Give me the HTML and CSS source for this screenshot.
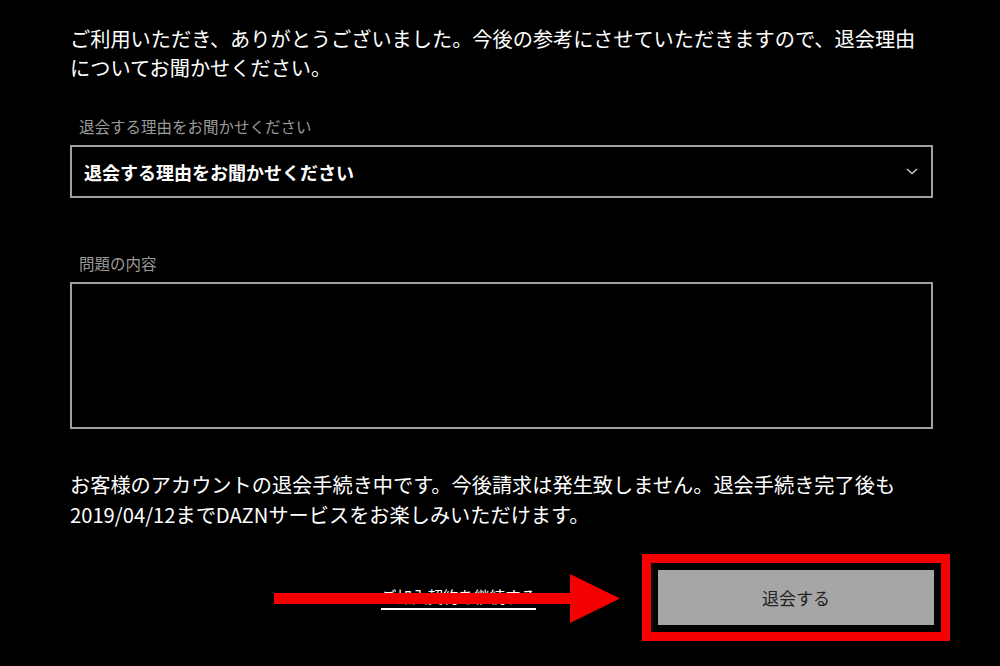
FILE: index.html
```html
<!DOCTYPE html>
<html lang="ja">
<head>
<meta charset="utf-8">
<title>退会</title>
<link rel="stylesheet" href="styles.css">
</head>
<body>
<main class="page">
  <p class="lead">ご利用いただき、ありがとうございました。今後の参考にさせていただきますので、退会理由<br>についてお聞かせください。</p>

  <div class="field">
    <div class="label">退会する理由をお聞かせください</div>
    <div class="select">
      <span class="select-text">退会する理由をお聞かせください</span>
      <svg class="chev" width="12" height="7" viewBox="0 0 12 7"><path d="M1 1 L6 5.5 L11 1" fill="none" stroke="#c8c8c8" stroke-width="1.6"/></svg>
    </div>
  </div>

  <div class="field field-2">
    <div class="label">問題の内容</div>
    <textarea class="area"></textarea>
  </div>

  <p class="note">お客様のアカウントの退会手続き中です。今後請求は発生致しません。退会手続き完了後も<br>2019/04/12までDAZNサービスをお楽しみいただけます。</p>

  <div class="actions">
    <a class="keep" href="#">ご加入契約を継続する</a>
    <button class="cancel" type="button">退会する</button>
    <svg class="arrow" width="346" height="49" viewBox="0 0 346 49"><rect x="0" y="19" width="297" height="11" fill="#f40000"/><polygon points="296,0 346,24.5 296,49" fill="#f40000"/></svg>
  </div>
</main>
</body>
</html>
```
FILE: styles.css
```css
html, body {
  margin: 0;
  padding: 0;
  background: #000;
}
body {
  width: 1000px;
  height: 666px;
  overflow: hidden;
  font-family: "Noto Sans CJK JP", "Noto Sans", sans-serif;
  color: #fff;
}
.page {
  padding: 24px 67px 0 70px;
}
.lead {
  margin: 0;
  font-size: 20.2px;
  line-height: 29px;
}
.field {
  margin-top: 34px;
  display: flex;
  flex-direction: column;
  gap: 9px;
}
.field-2 {
  margin-top: 55px;
}
.label {
  padding-left: 9px;
  font-size: 15.5px;
  line-height: 20px;
  color: #9a9a9a;
}
.select {
  box-sizing: border-box;
  height: 53px;
  border: 2px solid #a0a0a0;
  display: flex;
  align-items: center;
  justify-content: space-between;
  padding: 0 13px 0 12px;
}
.select-text {
  font-size: 18px;
  font-weight: 700;
  line-height: 24px;
}
.chev {
  display: block;
}
.area {
  display: block;
  box-sizing: border-box;
  width: 100%;
  height: 147px;
  margin: 0;
  background: #000;
  border: 2px solid #a0a0a0;
  resize: none;
  outline: none;
}
.note {
  margin: 41px 0 0;
  font-size: 20.2px;
  line-height: 30px;
}
.actions {
  position: relative;
  margin-top: 40px;
  display: flex;
  justify-content: flex-end;
  align-items: center;
  gap: 122px;
}
.keep {
  color: #fff;
  font-size: 15.5px;
  line-height: 20px;
  text-decoration: underline;
  text-decoration-thickness: 2px;
  text-underline-offset: 5px;
  margin-top: -3px;
}
.cancel {
  width: 276px;
  height: 55px;
  margin-right: -1px;
  background: #a6a6a6;
  color: #222;
  border: none;
  font-family: "Noto Sans CJK JP", "Noto Sans", sans-serif;
  font-size: 17px;
  outline: 9px solid #f40000;
  outline-offset: 7px;
}
.arrow {
  position: absolute;
  left: 204px;
  top: 4px;
}
```
